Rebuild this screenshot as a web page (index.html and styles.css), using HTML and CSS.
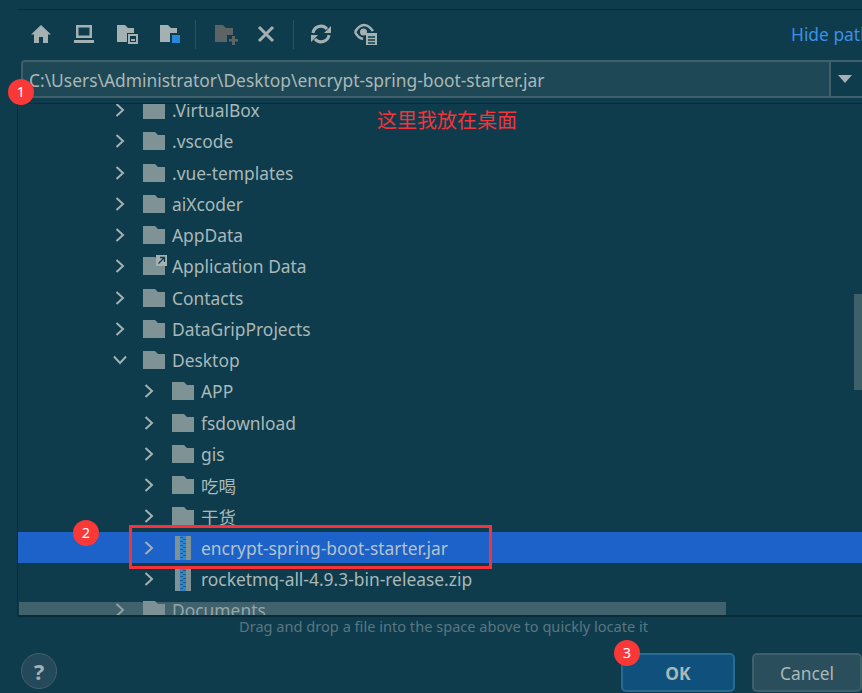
FILE: index.html
```html
<!DOCTYPE html>
<html lang="en">
<head>
<meta charset="utf-8">
<title>Choose file</title>
<link rel="stylesheet" href="styles.css">
</head>
<body>
<svg class="defs" width="0" height="0" aria-hidden="true">
  <symbol id="folder" viewBox="0 0 22 18"><path d="M0 0h12l3 3h7v15H0z"/></symbol>
  <symbol id="chev" viewBox="0 0 12 16"><path d="M2.500 2l6.500 6-6.500 6" fill="none" stroke="currentColor" stroke-width="2"/></symbol>
  <symbol id="down" viewBox="0 0 16 12"><path d="M2 2.500l6 6.500 6-6.500" fill="none" stroke="currentColor" stroke-width="2"/></symbol>
  <symbol id="zip" viewBox="0 0 16 24"><path fill="#7f9296" d="M0 0h5v24H0zM11 0h5v24h-5z"/><path fill="#2f86d0" d="M5 0h6v24H5z"/><path fill="#0f3c4c" opacity=".55" d="M5 1h3v1H5zM8 3h3v1H8zM5 5h3v1H5zM8 7h3v1H8zM5 9h3v1H5zM8 11h3v1H8zM5 13h3v1H5zM8 15h3v1H8zM5 17h3v1H5zM8 19h3v1H8zM5 21h3v1H5z"/></symbol>
</svg>
<main class="dialog">
  <div class="toolbar">
    <svg class="tool" viewBox="0 0 22 22"><path fill="#a3b1b3" d="M11 2L1 11.500h3V20h5v-6h4v6h5v-8.500h3z"/></svg>
    <svg class="tool" viewBox="0 0 22 22"><path fill="#a3b1b3" d="M3 2h16v13H3zM5.500 4.500v8h11v-8zM1 17h20v3H1z" fill-rule="evenodd"/></svg>
    <svg class="tool" viewBox="0 0 22 22"><path fill="#a3b1b3" d="M1 2h8l3 3h6v5h-7v9H1z"/><path fill="none" stroke="#a3b1b3" stroke-width="2" d="M13 12h8v8h-8z"/><path fill="#a3b1b3" d="M15 16h4v2h-4z"/></svg>
    <svg class="tool" viewBox="0 0 22 22"><path fill="#a3b1b3" d="M1 2h8l3 3h6v5h-7v9H1z"/><path fill="#2a86d8" d="M13 12h8v8h-8z"/></svg>
    <span class="sep"></span>
    <svg class="tool tool-add" viewBox="0 0 24 22"><path fill="#5c6466" d="M1 2h8l3 3h7v7h-6v7H1z"/><path fill="#5c6466" d="M18 13h3v3h3v2.500h-3V22h-3v-3.500h-3V16h3z"/></svg>
    <svg class="tool tool-x" viewBox="0 0 22 22"><path d="M4 4l14 14M18 4L4 18" stroke="#a3b1b3" stroke-width="3" fill="none"/></svg>
    <span class="sep"></span>
    <svg class="tool tool-sync" viewBox="0 0 22 22"><path fill="none" stroke="#a3b1b3" stroke-width="3" d="M3 10a8 8 0 0 1 14-4M19 12a8 8 0 0 1-14 4"/><path fill="#a3b1b3" d="M21 3v7h-7zM1 19v-7h7z"/></svg>
    <svg class="tool tool-eye" viewBox="0 0 26 24"><path fill="none" stroke="#a3b1b3" stroke-width="2.600" d="M2 10c3-5 6-7 9-7s6 2 9 6M2 10c2 4 4 6 8 7"/><circle cx="10.500" cy="10" r="3.500" fill="#a3b1b3"/><path fill="#a3b1b3" d="M13 11h11v12H13z"/><path stroke="#0f3c4c" stroke-width="1.500" d="M15 15h7M15 18h7M15 21h7"/></svg>
    <a class="hide-path">Hide path</a>
  </div>
  <div class="path-row">
    <div class="path-input">C:\Users\Administrator\Desktop\encrypt-spring-boot-starter.jar</div>
    <div class="path-drop"><span class="caret"></span></div>
  </div>
  <div class="tree">
    <ul class="rows">
      <li class="row"><svg class="chev"><use href="#chev"/></svg><svg class="folder"><use href="#folder"/></svg><span>.VirtualBox</span></li>
      <li class="row"><svg class="chev"><use href="#chev"/></svg><svg class="folder"><use href="#folder"/></svg><span>.vscode</span></li>
      <li class="row"><svg class="chev"><use href="#chev"/></svg><svg class="folder"><use href="#folder"/></svg><span>.vue-templates</span></li>
      <li class="row"><svg class="chev"><use href="#chev"/></svg><svg class="folder"><use href="#folder"/></svg><span>aiXcoder</span></li>
      <li class="row"><svg class="chev"><use href="#chev"/></svg><svg class="folder"><use href="#folder"/></svg><span>AppData</span></li>
      <li class="row"><svg class="chev"><use href="#chev"/></svg><span class="link-wrap"><svg class="folder"><use href="#folder"/></svg><svg class="link" viewBox="0 0 11 11"><path fill="#a3b1b3" d="M0 0h11v11H0z"/><path d="M2.500 8.500L8 3M4 2.500h4.500V7" stroke="#0f3c4c" stroke-width="1.300" fill="none"/></svg></span><span>Application Data</span></li>
      <li class="row"><svg class="chev"><use href="#chev"/></svg><svg class="folder"><use href="#folder"/></svg><span>Contacts</span></li>
      <li class="row"><svg class="chev"><use href="#chev"/></svg><svg class="folder"><use href="#folder"/></svg><span>DataGripProjects</span></li>
      <li class="row"><svg class="chev chev-down"><use href="#down"/></svg><svg class="folder"><use href="#folder"/></svg><span>Desktop</span></li>
      <li class="row sub"><svg class="chev"><use href="#chev"/></svg><svg class="folder"><use href="#folder"/></svg><span>APP</span></li>
      <li class="row sub"><svg class="chev"><use href="#chev"/></svg><svg class="folder"><use href="#folder"/></svg><span>fsdownload</span></li>
      <li class="row sub"><svg class="chev"><use href="#chev"/></svg><svg class="folder"><use href="#folder"/></svg><span>gis</span></li>
      <li class="row sub"><svg class="chev"><use href="#chev"/></svg><svg class="folder"><use href="#folder"/></svg><span>吃喝</span></li>
      <li class="row sub"><svg class="chev"><use href="#chev"/></svg><svg class="folder"><use href="#folder"/></svg><span>干货</span></li>
      <li class="row sub selected"><svg class="chev"><use href="#chev"/></svg><svg class="zip"><use href="#zip"/></svg><span>encrypt-spring-boot-starter.jar</span></li>
      <li class="row sub"><svg class="chev"><use href="#chev"/></svg><svg class="zip"><use href="#zip"/></svg><span>rocketmq-all-4.9.3-bin-release.zip</span></li>
      <li class="row"><svg class="chev"><use href="#chev"/></svg><svg class="folder"><use href="#folder"/></svg><span>Documents</span></li>
    </ul>
    <div class="hscroll"></div>
    <div class="vscroll"></div>
  </div>
  <p class="hint">Drag and drop a file into the space above to quickly locate it</p>
  <div class="footer">
    <button class="help">?</button>
    <button class="btn ok">OK</button>
    <button class="btn cancel">Cancel</button>
  </div>
</main>
<div class="note">这里我放在桌面</div>
<div class="redbox"></div>
<span class="badge b1">1</span>
<span class="badge b2">2</span>
<span class="badge b3">3</span>
</body>
</html>
```
FILE: styles.css
```css
* { box-sizing: border-box; }
html, body { margin: 0; padding: 0; height: 100%; }
body {
  position: relative;
  width: 862px;
  height: 693px;
  overflow: hidden;
  background: #0f3c4c;
  color: #a9b8b8;
  font-family: "Noto Sans", "Noto Sans CJK SC", sans-serif;
  font-size: 17.400px;
}
.defs { position: absolute; }
.dialog {
  display: flex;
  flex-direction: column;
  height: 693px;
  padding-top: 9px;
}
.toolbar {
  display: flex;
  align-items: center;
  height: 51px;
  margin-left: 17px;
  padding: 1px 0 3px 13px;
  border-top: 1px solid #0a2c38;
  overflow: hidden;
}
.tool { width: 22px; height: 22px; margin-right: 21px; flex: none; }
.tool-add { width: 24px; margin-right: 17px; }
.tool-x { margin-right: 16px; }
.tool-sync { margin-right: 21px; }
.tool-eye { width: 26px; height: 24px; margin-right: 0; }
.sep { width: 1px; height: 29px; background: #2c5260; margin: 0 18px 0 -7px; flex: none; }
.tool-x + .sep { margin: 0 16px 0 0; }
.hide-path {
  margin-left: auto;
  flex: none;
  width: 71px;
  white-space: nowrap;
  overflow: hidden;
  color: #3d8fe6;
  font-size: 17.400px;
}
.path-row { display: flex; height: 38px; margin-left: 21px; }
.path-input {
  width: 809px;
  padding-left: 6px;
  background: #1f4856;
  border: 2px solid #3f5f6a;
  border-right-width: 1px;
  border-radius: 4px 0 0 4px;
  line-height: 36px;
  white-space: nowrap;
}
.path-drop {
  flex: 1;
  display: flex;
  align-items: center;
  justify-content: center;
  padding-right: 3px;
  border: 2px solid #3f5f6a;
  border-left-width: 1px;
  border-right: 0;
}
.caret {
  width: 0;
  height: 0;
  border-left: 7px solid transparent;
  border-right: 7px solid transparent;
  border-top: 8px solid #a3b1b3;
}
.tree {
  position: relative;
  height: 514px;
  flex: none;
  margin: 5px 0 0 17px;
  border-top: 1px solid #0a2c38;
  border-left: 1px solid #0a2c38;
  border-bottom: 2px solid #0a2c38;
  overflow: hidden;
}
.rows { list-style: none; margin: -9.600px 0 0; padding: 0; }
.row {
  display: flex;
  align-items: center;
  height: 31.250px;
  padding-left: 96px;
  white-space: nowrap;
}
.row.sub { padding-left: 125px; }
.row.selected { background: #1d62c8; color: #b4c2cc; }
.chev { width: 12px; height: 16px; margin-right: 17px; color: #a3b1b3; flex: none; }
.chev-down { width: 16px; height: 12px; margin-left: -2px; margin-right: 15px; }
.folder { width: 22px; height: 18px; margin-right: 7px; fill: #7f9296; flex: none; }
.zip { width: 16px; height: 24px; margin: 0 10px 0 3px; flex: none; }
.link-wrap { position: relative; display: flex; }
.link { position: absolute; left: 13px; top: -2px; width: 11px; height: 11px; }
.hscroll {
  position: absolute;
  left: 1px;
  bottom: 0;
  width: 707px;
  height: 13px;
  background: rgba(122, 145, 150, .45);
}
.vscroll {
  position: absolute;
  right: 0;
  top: 190px;
  width: 8px;
  height: 96px;
  background: #3e6069;
}
.hint {
  margin: 0;
  height: 21px;
  padding-left: 239px;
  line-height: 19px;
  font-size: 14.600px;
  color: #5a7680;
  white-space: nowrap;
}
.footer {
  display: flex;
  align-items: flex-start;
  flex: 1;
  padding: 15px 0 0 21px;
}
.help {
  width: 36px;
  height: 36px;
  padding: 0;
  border-radius: 50%;
  border: 1px solid #41626d;
  background: #23495a;
  color: #a3b1b3;
  font: bold 22px "Noto Sans", sans-serif;
}
.btn {
  flex: none;
  height: 39px;
  border-radius: 5px;
  padding: 0;
  font-family: "Noto Sans", sans-serif;
  font-size: 17.400px;
  color: #a9b8b8;
}
.ok {
  width: 114px;
  margin-left: 564px;
  margin-right: 17px;
  background: #10507c;
  border: 2px solid #276a92;
  font-weight: 700;
}
.cancel {
  width: 110px;
  background: #2a4e5c;
  border: 2px solid #3f5f6a;
}
.note {
  position: absolute;
  left: 377px;
  top: 105px;
  color: #f5333a;
  font: 20px/30px "Noto Sans CJK SC", sans-serif;
}
.redbox {
  position: absolute;
  left: 129px;
  top: 525px;
  width: 363px;
  height: 44px;
  border: 3px solid #f5333a;
}
.badge {
  position: absolute;
  width: 26px;
  height: 26px;
  border-radius: 50%;
  background: #f93838;
  color: #fff;
  text-align: center;
  line-height: 25px;
  font-size: 14.500px;
}
.b1 { left: 8px; top: 79px; }
.b2 { left: 73px; top: 520px; }
.b3 { left: 614px; top: 640px; }
```
